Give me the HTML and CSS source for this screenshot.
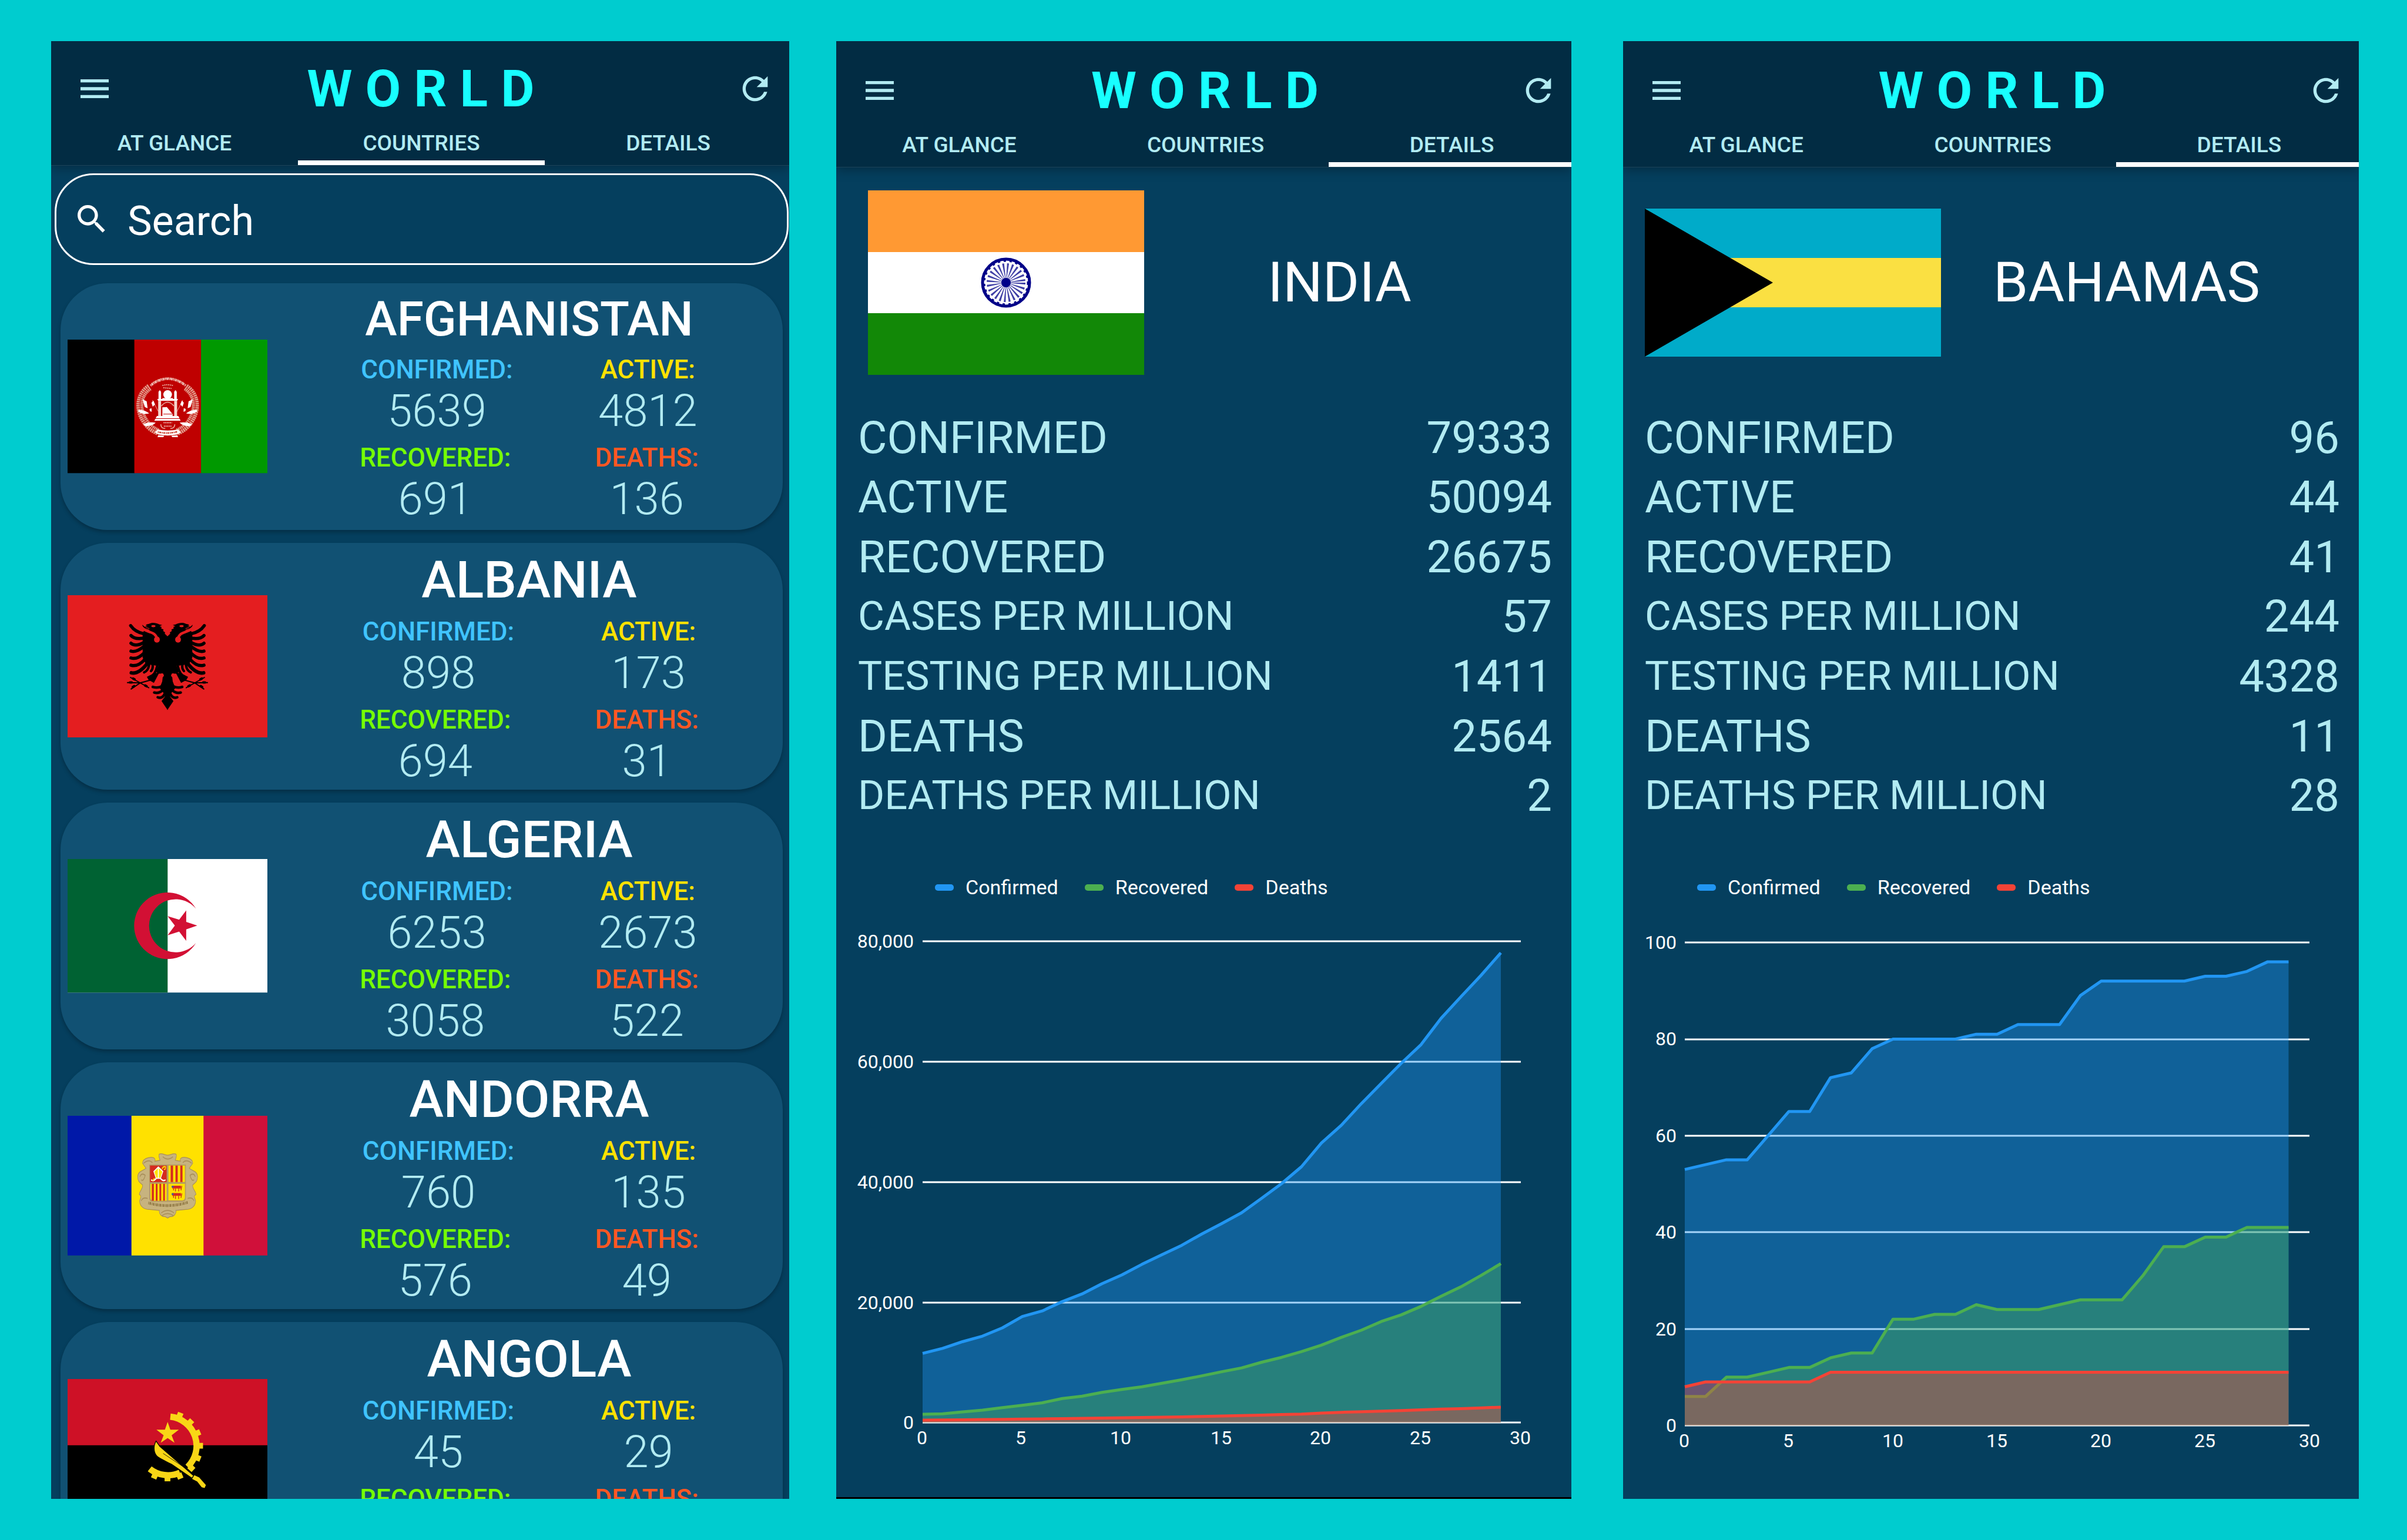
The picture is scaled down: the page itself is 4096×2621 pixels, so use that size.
FILE: index.html
```html
<!DOCTYPE html>
<html lang="en">
<head>
<meta charset="utf-8">
<title>World</title>
<link rel="stylesheet" href="styles.css">
</head>
<body>
<svg class="defs" aria-hidden="true">
  <symbol id="icon-menu" viewBox="0 0 24 24"><path d="M3 18h18v-2H3v2zm0-5h18v-2H3v2zm0-7v2h18V6H3z"/></symbol>
  <symbol id="icon-refresh" viewBox="0 0 24 24"><path d="M17.65 6.35C16.2 4.9 14.21 4 12 4c-4.42 0-7.99 3.58-7.99 8s3.57 8 7.99 8c3.73 0 6.84-2.55 7.73-6h-2.08c-.82 2.33-3.04 4-5.65 4-3.31 0-6-2.69-6-6s2.69-6 6-6c1.66 0 3.14.69 4.22 1.78L13 11h7V4l-2.35 2.35z"/></symbol>
  <symbol id="icon-search" viewBox="0 0 24 24"><path d="M15.5 14h-.79l-.28-.27C15.41 12.59 16 11.11 16 9.5 16 5.91 13.09 3 9.5 3S3 5.91 3 9.5 5.91 16 9.5 16c1.61 0 3.09-.59 4.23-1.57l.27.28v.79l5 4.99L20.49 19l-4.99-5zm-6 0C7.01 14 5 11.99 5 9.5S7.01 5 9.5 5 14 7.01 14 9.5 11.99 14 9.5 14z"/></symbol>
  <symbol id="eagle-half" viewBox="0 0 1248 890" overflow="visible">
    <path d="M656 368 L638 350 L640 342 L628 334 L630 324 L616 318 L618 308 L606 304 L622 296 L604 293 C580 280 555 280 540 289 L524 293 L519 301 L532 301 L514 308 L497 294 C500 308 512 318 528 322 L545 327 L520 338 L508 333 L500 350 L500 500 L520 540 L598 552 L585 590 L600 600 L628 600 L622 650 L606 690 L618 706 L636 728 L638 745 L618 772 L656 828 Z"/>
    <g fill="none" stroke="#000" stroke-linecap="round">
      <path stroke-width="20" d="M510 352Q452 340 425 300M508 378Q450 388 427 362M508 405Q455 435 427 410M508 430Q460 470 427 459M510 470Q465 515 427 502M514 510Q470 560 427 547"/>
      <path stroke-width="22" d="M530 535Q475 605 429 595"/>
      <path stroke-width="15" d="M540 545Q535 582 509 592M562 545Q566 570 552 584M590 555Q578 610 545 620"/>
      <path stroke-width="16" d="M618 680Q592 692 563 683M626 703Q600 726 572 718M636 728Q622 758 594 748"/>
      <path stroke-width="7" d="M560 637L485 658M485 658L405 656M485 658L424 624M485 658L428 696M485 658L538 688"/>
      <path stroke-width="15" d="M420 655h12M440 631l10 5M438 684l9-6M515 674l10 5"/>
      <path stroke="#e41e20" stroke-width="16" d="M512 326C545 345 583 342 589 384"/>
      <path stroke="#e41e20" stroke-width="36" d="M589 386v2"/>
      <path stroke="#e41e20" stroke-width="24" d="M620 611Q606 622 590 646"/>
    </g>
    <path d="M526 620 L560 604 L606 590 L570 658 L538 640 Z"/>
    <ellipse cx="567" cy="303" rx="13" ry="7" fill="#e41e20"/>
    <path d="M520 312l22 6" stroke="#e41e20" stroke-width="4"/>
  </symbol>
</svg>

<main class="stage">

  <section class="panel" aria-label="Countries">
    <header class="top">
      <div class="toolbar">
        <button class="icon-button" aria-label="Menu"><svg><use href="#icon-menu"/></svg></button>
        <h1 class="brand">WORLD</h1>
        <button class="icon-button" aria-label="Refresh"><svg><use href="#icon-refresh"/></svg></button>
      </div>
      <nav class="tabs">
        <a href="#glance">AT GLANCE</a>
        <a href="#countries" class="active" aria-current="page">COUNTRIES</a>
        <a href="#details">DETAILS</a>
      </nav>
    </header>

    <label class="search">
      <svg aria-hidden="true"><use href="#icon-search"/></svg>
      <input type="text" placeholder="Search" aria-label="Search">
    </label>

    <div class="cards">
      <article class="card">
        <svg class="flag" viewBox="0 0 416 278" role="img" aria-label="Flag of Afghanistan">
          <path fill="#000" d="M0 0h140v278H0z"/><path fill="#bf0000" d="M139 0h139v278H139z"/><path fill="#009900" d="M278 0h138v278H278z"/>
          <g transform="translate(140 63) scale(.3333)">
            <g fill="none">
              <path stroke="#e39c8c" stroke-width="44" stroke-dasharray="9 3" d="M92 108C28 150 10 240 62 318C88 358 118 378 148 388"/>
              <path stroke="#e39c8c" stroke-width="44" stroke-dasharray="9 3" d="M318 108C382 150 400 240 348 318C322 358 292 378 262 388"/>
              <path stroke="#bf0000" stroke-width="3" d="M86 112C24 160 14 240 66 318C92 356 118 374 148 384M324 112C386 160 396 240 344 318C318 356 292 374 262 384"/>
              <path stroke="#f3cfc6" stroke-width="15" stroke-dasharray="5 3 9 2 3 4" d="M98 98Q205 14 318 98"/>
              <path stroke="#e8a79a" stroke-width="10" stroke-dasharray="3 4 7 2" d="M108 84Q205 20 306 84"/>
              <path stroke="#e8a79a" stroke-width="7" stroke-dasharray="8 4" d="M172 98Q204 88 238 98M178 112L230 116"/>
              <path stroke="#f0bdb2" stroke-width="3" d="M110 190L148 262M300 190L262 262"/>
            </g>
            <g fill="#fff">
              <path d="M48 184L74 196L80 240L62 232ZM362 184L336 196L330 240L348 232ZM22 250Q60 248 90 272Q50 282 22 262ZM388 250Q350 248 320 272Q360 282 388 262ZM52 340Q92 322 130 330Q112 350 66 352ZM358 340Q318 322 280 330Q298 350 344 352Z"/>
              <path d="M104 206L116 192L126 216L112 230ZM306 206L294 192L284 216L298 230ZM92 244L104 240L106 262L94 258ZM318 244L306 240L304 262L316 258Z"/>
              <circle cx="205" cy="154" r="27"/>
              <path d="M148 138Q156 118 164 138V184H148ZM246 138Q254 118 262 138V184H246ZM140 182H270L264 194H146ZM172 176H238V184H172Z"/>
              <path fill="#f6d5cd" d="M146 194H164V290H146ZM246 194H264V290H246Z"/>
              <path d="M138 288H272L286 318H122ZM172 234L200 232L236 276V290H172Z"/>
              <path d="M140 372Q205 386 272 372L286 392L264 404Q205 416 148 404L126 392ZM146 408L184 412L178 420H142ZM228 412L266 408L270 420H234Z"/>
            </g>
            <path fill="none" stroke="#e8a79a" stroke-width="6" d="M166 226Q205 178 244 226"/>
            <path fill="none" stroke="#bf0000" stroke-width="4" d="M124 305H284M178 276H234"/>
            <path fill="none" stroke="#c9402f" stroke-width="9" stroke-dasharray="6 3 12 4" d="M144 388Q205 402 266 386"/>
            <path fill="none" stroke="#f0bdb2" stroke-width="8" stroke-dasharray="6 4" d="M180 330H232M182 352H230"/>
            <path fill="none" stroke="#e8a79a" stroke-width="6" d="M162 340Q164 368 190 366M250 340Q248 368 222 366"/>
          </g>
        </svg>
        <div class="info">
          <h2 class="long">AFGHANISTAN</h2>
          <dl class="figures">
            <div class="confirmed"><dt>CONFIRMED:</dt><dd>5639</dd></div>
            <div class="ill"><dt>ACTIVE:</dt><dd>4812</dd></div>
          </dl>
          <dl class="figures">
            <div class="recovered"><dt>RECOVERED:</dt><dd>691</dd></div>
            <div class="deaths"><dt>DEATHS:</dt><dd>136</dd></div>
          </dl>
        </div>
      </article>

      <article class="card">
        <svg class="flag" viewBox="0 0 1248 890" role="img" aria-label="Flag of Albania">
          <path fill="#e41e20" d="M0 0h1248v890H0z"/>
          <g transform="translate(-31 -110)">
            <use href="#eagle-half" width="1248" height="890"/>
            <use href="#eagle-half" width="1248" height="890" transform="translate(1310 0) scale(-1 1)"/>
          </g>
        </svg>
        <div class="info">
          <h2>ALBANIA</h2>
          <dl class="figures">
            <div class="confirmed"><dt>CONFIRMED:</dt><dd>898</dd></div>
            <div class="ill"><dt>ACTIVE:</dt><dd>173</dd></div>
          </dl>
          <dl class="figures">
            <div class="recovered"><dt>RECOVERED:</dt><dd>694</dd></div>
            <div class="deaths"><dt>DEATHS:</dt><dd>31</dd></div>
          </dl>
        </div>
      </article>

      <article class="card">
        <svg class="flag" viewBox="30 45 1248 834" role="img" aria-label="Flag of Algeria">
          <path fill="#fff" d="M30 45h1248v834H30z"/><path fill="#006233" d="M30 45h625v834H30z"/>
          <path fill="#d21034" d="M832 355A208 208 0 1 0 832 569A166 166 0 1 1 832 355ZM840 461L771 438V366L727 424L655 402L700 461L655 521L727 498L771 556V485Z"/>
        </svg>
        <div class="info">
          <h2>ALGERIA</h2>
          <dl class="figures">
            <div class="confirmed"><dt>CONFIRMED:</dt><dd>6253</dd></div>
            <div class="ill"><dt>ACTIVE:</dt><dd>2673</dd></div>
          </dl>
          <dl class="figures">
            <div class="recovered"><dt>RECOVERED:</dt><dd>3058</dd></div>
            <div class="deaths"><dt>DEATHS:</dt><dd>522</dd></div>
          </dl>
        </div>
      </article>

      <article class="card">
        <svg class="flag" viewBox="0 0 416 291" role="img" aria-label="Flag of Andorra">
          <path fill="#0018a8" d="M0 0h134v291H0z"/><path fill="#ffe100" d="M133 0h151v291H133z"/><path fill="#d0103a" d="M283 0h133v291H283z"/>
          <g transform="scale(.3333 .523) translate(-30 -33)">
            <path fill="#c7b37f" stroke="#a98f5a" stroke-width="3" d="M655 190C680 188 690 180 708 186C714 196 704 204 702 210L735 214C728 200 750 196 776 200C800 204 812 212 812 222L790 242C805 252 842 252 842 276C842 296 826 300 812 308C806 322 832 334 832 346C816 352 822 356 830 372C828 396 800 406 770 406L706 410C712 424 690 436 672 434L655 440L638 434C620 436 598 424 604 410L540 406C510 406 482 396 480 372C488 356 494 352 478 346C478 334 504 322 498 308C484 300 468 296 468 276C468 252 505 252 520 242L498 222C498 212 510 204 534 200C560 196 582 200 575 214L608 210C606 204 596 196 602 186C620 180 630 188 655 190Z"/>
            <g fill="none" stroke="#a98f5a" stroke-width="4">
              <path d="M625 196Q655 214 688 196M505 222Q540 204 560 220M805 222Q770 204 750 220M482 276Q492 258 515 270Q505 296 490 288M828 276Q818 258 795 270Q805 296 820 288M490 372Q500 356 530 362M820 372Q810 356 780 362M615 420Q655 400 695 420M620 430Q655 414 690 430"/>
              <path stroke="#8c7440" stroke-width="11" stroke-dasharray="4 4 8 5" d="M535 380Q655 402 780 378"/>
            </g>
            <path fill="#b39a66" d="M540 227H769V362Q769 376 740 376H570Q540 376 540 362Z"/>
            <path fill="#d52b1e" d="M545 231H649V297H545Z"/><path fill="#ffe100" d="M660 231H763V297H660ZM548 304H649V371H572Q548 371 548 360ZM660 304H763V358Q763 370 742 370H660Z"/>
            <path fill="#d52b1e" d="M674 231h15v66h-15zM704 231h14v66h-14zM734 231h14v66h-14zM556 304h13v67h-13zM581 304h11v67h-11zM604 304h11v67h-11zM627 304h11v67h-11z"/>
            <path fill="#fff" d="M597 234L628 254L612 284H582L566 254Z"/><path fill="#ffe100" d="M594 242V280H584L572 256ZM600 242V280H610L622 256Z"/>
            <path fill="none" stroke="#fff" stroke-width="6" d="M552 288Q566 296 584 282M642 288Q628 296 610 282"/>
            <path fill="none" stroke="#ffe100" stroke-width="5" d="M560 292L574 282M620 246Q624 234 642 236Q644 248 632 246"/>
            <path fill="none" stroke="#d52b1e" stroke-width="11" d="M684 317H738M684 346H738"/>
            <path fill="none" stroke="#d52b1e" stroke-width="5" d="M692 330v-8M704 334v-12M724 334v-12M738 330l6-18M692 360v-10M704 364v-12M724 364v-12M738 360l6-18"/>
            <path fill="#3f5f9a" d="M680 312h12v7h-12zM680 341h12v7h-12z"/>
          </g>
        </svg>
        <div class="info">
          <h2>ANDORRA</h2>
          <dl class="figures">
            <div class="confirmed"><dt>CONFIRMED:</dt><dd>760</dd></div>
            <div class="ill"><dt>ACTIVE:</dt><dd>135</dd></div>
          </dl>
          <dl class="figures">
            <div class="recovered"><dt>RECOVERED:</dt><dd>576</dd></div>
            <div class="deaths"><dt>DEATHS:</dt><dd>49</dd></div>
          </dl>
        </div>
      </article>

      <article class="card">
        <svg class="flag" viewBox="0 0 416 277" role="img" aria-label="Flag of Angola">
          <path fill="#ce1126" d="M0 0h416v139H0z"/><path fill="#000" d="M0 138h416v139H0z"/>
          <g fill="#f9d616">
            <path fill="none" stroke="#f9d616" stroke-width="13" d="M214 78.500A61 61 0 0 1 250 183M171 187A61 61 0 0 0 234 195"/>
            <path d="M202 65h12v12h-12z" transform="rotate(22 208 139)"/>
            <path d="M202 65h12v12h-12z" transform="rotate(44 208 139)"/>
            <path d="M202 65h12v12h-12z" transform="rotate(67 208 139)"/>
            <path d="M202 65h12v12h-12z" transform="rotate(90 208 139)"/>
            <path d="M202 65h12v12h-12z" transform="rotate(112 208 139)"/>
            <path d="M202 65h12v12h-12z" transform="rotate(133 208 139)"/>
            <path d="M202 65h12v12h-12z" transform="rotate(158 208 139)"/>
            <path d="M202 65h12v12h-12z" transform="rotate(180 208 139)"/>
            <path d="M202 65h12v12h-12z" transform="rotate(203 208 139)"/>
            <g transform="scale(.3333 .523) translate(-30 -1078)">
              <path d="M655 1249L672 1280H725L680 1302L698 1332L655 1313L612 1332L630 1302L585 1280H638Z"/>
              <path stroke="#000" stroke-width="4" d="M583 1325C566 1342 566 1372 590 1386Q610 1396 680 1418L806 1473L818 1463L606 1346Z"/>
              <path d="M822 1461L852 1470L894 1500L886 1512L868 1509L840 1486L808 1476Z"/>
            </g>
            <path fill="none" stroke="#000" stroke-width="1" d="M199 155L258 194"/>
          </g>
        </svg>
        <div class="info">
          <h2>ANGOLA</h2>
          <dl class="figures">
            <div class="confirmed"><dt>CONFIRMED:</dt><dd>45</dd></div>
            <div class="ill"><dt>ACTIVE:</dt><dd>29</dd></div>
          </dl>
          <dl class="figures">
            <div class="recovered"><dt>RECOVERED:</dt></div>
            <div class="deaths"><dt>DEATHS:</dt></div>
          </dl>
        </div>
      </article>
    </div>
  </section>

  <section class="panel detail india" aria-label="India">
    <header class="top">
      <div class="toolbar">
        <button class="icon-button" aria-label="Menu"><svg><use href="#icon-menu"/></svg></button>
        <h1 class="brand">WORLD</h1>
        <button class="icon-button" aria-label="Refresh"><svg><use href="#icon-refresh"/></svg></button>
      </div>
      <nav class="tabs">
        <a href="#glance">AT GLANCE</a>
        <a href="#countries">COUNTRIES</a>
        <a href="#details" class="active" aria-current="page">DETAILS</a>
      </nav>
    </header>
    <div class="country">
      <svg class="country-flag" viewBox="0 0 470 314" role="img" aria-label="Flag of India">
        <path fill="#ff9933" d="M0 0h470v105H0z"/><path fill="#fff" d="M0 105h470v104H0z"/><path fill="#128807" d="M0 209h470v105H0z"/>
        <circle cx="235" cy="157" r="40" fill="none" stroke="#000088" stroke-width="5"/>
        <circle cx="235" cy="157" r="37" fill="none" stroke="#000088" stroke-width="3" stroke-dasharray="4 6"/>
        <circle cx="235" cy="157" r="19" fill="none" stroke="#000088" stroke-opacity=".75" stroke-width="28" stroke-dasharray="2 3"/>
        <circle cx="235" cy="157" r="8" fill="#000088"/>
      </svg>
      <h2>INDIA</h2>
    </div>
    <table class="stats">
      <tr><th scope="row">CONFIRMED</th><td>79333</td></tr>
      <tr><th scope="row">ACTIVE</th><td>50094</td></tr>
      <tr><th scope="row">RECOVERED</th><td>26675</td></tr>
      <tr><th scope="row" class="rate">CASES PER MILLION</th><td>57</td></tr>
      <tr><th scope="row" class="rate">TESTING PER MILLION</th><td>1411</td></tr>
      <tr><th scope="row">DEATHS</th><td>2564</td></tr>
      <tr><th scope="row" class="rate">DEATHS PER MILLION</th><td>2</td></tr>
    </table>
    <ul class="legend">
      <li class="key-confirmed">Confirmed</li>
      <li class="key-recovered">Recovered</li>
      <li class="key-deaths">Deaths</li>
    </ul>
    <svg class="chart" viewBox="0 0 1251 960" role="img" aria-label="Cases in India over 30 days">
      <path class="grid" d="M147 70H1165M147 275H1165M147 480H1165M147 685H1165M147 889H1165"/>
      <g class="y-labels">
        <text x="132" y="81">80,000</text><text x="132" y="286">60,000</text><text x="132" y="491">40,000</text><text x="132" y="696">20,000</text><text x="132" y="900">0</text>
      </g>
      <g class="x-labels">
        <text x="146" y="926">0</text><text x="314" y="926">5</text><text x="484" y="926">10</text><text x="655" y="926">15</text><text x="824" y="926">20</text><text x="994" y="926">25</text><text x="1164" y="926">30</text>
      </g>
      <g transform="translate(147 889) scale(33.930 -.01024)">
        <polygon class="area confirmed-area" points="0,0 0,11487 1,12322 2,13430 3,14352 4,15722 5,17615 6,18539 7,20080 8,21370 9,23077 10,24530 11,26283 12,27890 13,29451 14,31324 15,33062 16,34863 17,37257 18,39699 19,42505 20,46437 21,49400 22,52987 23,56351 24,59695 25,62808 26,67161 27,70768 28,74292 29,78055 29,0"/>
        <polyline class="line confirmed-line" points="0,11487 1,12322 2,13430 3,14352 4,15722 5,17615 6,18539 7,20080 8,21370 9,23077 10,24530 11,26283 12,27890 13,29451 14,31324 15,33062 16,34863 17,37257 18,39699 19,42505 20,46437 21,49400 22,52987 23,56351 24,59695 25,62808 26,67161 27,70768 28,74292 29,78055"/>
        <polygon class="area recovered-area" points="0,0 0,1359 1,1432 2,1768 3,2041 4,2463 5,2854 6,3273 7,3975 8,4370 9,5012 10,5498 11,5939 12,6523 13,7104 14,7747 15,8437 16,9068 17,10007 18,10819 19,11775 20,12847 21,14142 22,15331 23,16776 24,17887 25,19301 26,20969 27,22549 28,24420 29,26400 29,0"/>
        <polyline class="line recovered-line" points="0,1359 1,1432 2,1768 3,2041 4,2463 5,2854 6,3273 7,3975 8,4370 9,5012 10,5498 11,5939 12,6523 13,7104 14,7747 15,8437 16,9068 17,10007 18,10819 19,11775 20,12847 21,14142 22,15331 23,16776 24,17887 25,19301 26,20969 27,22549 28,24420 29,26400"/>
        <polygon class="area deaths-area" points="0,0 0,393 1,405 2,448 3,486 4,521 5,559 6,592 7,645 8,681 9,721 10,780 11,825 12,881 13,939 14,1008 15,1079 16,1154 17,1223 18,1323 19,1391 20,1566 21,1693 22,1785 23,1889 24,1985 25,2101 26,2212 27,2294 28,2415 29,2551 29,0"/>
        <polyline class="line deaths-line" points="0,393 1,405 2,448 3,486 4,521 5,559 6,592 7,645 8,681 9,721 10,780 11,825 12,881 13,939 14,1008 15,1079 16,1154 17,1223 18,1323 19,1391 20,1566 21,1693 22,1785 23,1889 24,1985 25,2101 26,2212 27,2294 28,2415 29,2551"/>
      </g>
    </svg>
  </section>

  <section class="panel detail bahamas" aria-label="Bahamas">
    <header class="top">
      <div class="toolbar">
        <button class="icon-button" aria-label="Menu"><svg><use href="#icon-menu"/></svg></button>
        <h1 class="brand">WORLD</h1>
        <button class="icon-button" aria-label="Refresh"><svg><use href="#icon-refresh"/></svg></button>
      </div>
      <nav class="tabs">
        <a href="#glance">AT GLANCE</a>
        <a href="#countries">COUNTRIES</a>
        <a href="#details" class="active" aria-current="page">DETAILS</a>
      </nav>
    </header>
    <div class="country">
      <svg class="country-flag" viewBox="0 0 504 252" role="img" aria-label="Flag of the Bahamas">
        <path fill="#00abc9" d="M0 0h504v252H0z"/><path fill="#fae042" d="M0 84h504v84H0z"/><path fill="#000" d="M0 0L218 126L0 252z"/>
      </svg>
      <h2>BAHAMAS</h2>
    </div>
    <table class="stats">
      <tr><th scope="row">CONFIRMED</th><td>96</td></tr>
      <tr><th scope="row">ACTIVE</th><td>44</td></tr>
      <tr><th scope="row">RECOVERED</th><td>41</td></tr>
      <tr><th scope="row" class="rate">CASES PER MILLION</th><td>244</td></tr>
      <tr><th scope="row" class="rate">TESTING PER MILLION</th><td>4328</td></tr>
      <tr><th scope="row">DEATHS</th><td>11</td></tr>
      <tr><th scope="row" class="rate">DEATHS PER MILLION</th><td>28</td></tr>
    </table>
    <ul class="legend">
      <li class="key-confirmed">Confirmed</li>
      <li class="key-recovered">Recovered</li>
      <li class="key-deaths">Deaths</li>
    </ul>
    <svg class="chart" viewBox="0 0 1252 960" role="img" aria-label="Cases in the Bahamas over 30 days">
      <path class="grid" d="M105 72H1168M105 237H1168M105 401H1168M105 565H1168M105 730H1168M105 894H1168"/>
      <g class="y-labels">
        <text x="91" y="83">100</text><text x="91" y="247">80</text><text x="91" y="412">60</text><text x="91" y="576">40</text><text x="91" y="741">20</text><text x="91" y="905">0</text>
      </g>
      <g class="x-labels">
        <text x="104" y="931">0</text><text x="281" y="931">5</text><text x="459" y="931">10</text><text x="636" y="931">15</text><text x="813" y="931">20</text><text x="990" y="931">25</text><text x="1168" y="931">30</text>
      </g>
      <g transform="translate(105 894) scale(35.430 -8.220)">
        <polygon class="area confirmed-area" points="0,0 0,53 1,54 2,55 3,55 4,60 5,65 6,65 7,72 8,73 9,78 10,80 11,80 12,80 13,80 14,81 15,81 16,83 17,83 18,83 19,89 20,92 21,92 22,92 23,92 24,92 25,93 26,93 27,94 28,96 29,96 29,0"/>
        <polyline class="line confirmed-line" points="0,53 1,54 2,55 3,55 4,60 5,65 6,65 7,72 8,73 9,78 10,80 11,80 12,80 13,80 14,81 15,81 16,83 17,83 18,83 19,89 20,92 21,92 22,92 23,92 24,92 25,93 26,93 27,94 28,96 29,96"/>
        <polygon class="area recovered-area" points="0,0 0,6 1,6 2,10 3,10 4,11 5,12 6,12 7,14 8,15 9,15 10,22 11,22 12,23 13,23 14,25 15,24 16,24 17,24 18,25 19,26 20,26 21,26 22,31 23,37 24,37 25,39 26,39 27,41 28,41 29,41 29,0"/>
        <polyline class="line recovered-line" points="0,6 1,6 2,10 3,10 4,11 5,12 6,12 7,14 8,15 9,15 10,22 11,22 12,23 13,23 14,25 15,24 16,24 17,24 18,25 19,26 20,26 21,26 22,31 23,37 24,37 25,39 26,39 27,41 28,41 29,41"/>
        <polygon class="area deaths-area" points="0,0 0,8 1,9 6,9 7,11 29,11 29,0"/>
        <polyline class="line deaths-line" points="0,8 1,9 6,9 7,11 29,11"/>
      </g>
    </svg>
  </section>

</main>
</body>
</html>
```

FILE: styles.css
```css
:root {
  --frame: #00cccf;
  --bar: #022c43;
  --panel: #053f5e;
  --card: #115173;
  --ice: #b2ebf2;
  --blue: #2196f3;
  --green: #4caf50;
  --red: #f44336;
}

* {
  box-sizing: border-box;
}

html,
body {
  margin: 0;
  background: var(--frame);
  font-family: Roboto, "Liberation Sans", sans-serif;
  color: var(--ice);
}

h1,
h2,
dl,
dd,
ul {
  margin: 0;
  padding: 0;
}

.defs {
  position: absolute;
  width: 0;
  height: 0;
}

.stage {
  display: flex;
  gap: 80px;
  height: 100vh;
  padding: 70px 82px 70px 87px;
}

.panel {
  flex: 1256 1 0;
  min-width: 0;
  overflow: hidden;
  background: var(--panel);
}

.india {
  flex-grow: 1251;
  border-bottom: 3px solid #000;
}

.bahamas {
  flex-grow: 1252;
  margin-left: 8px;
}

/* Header */

.top {
  position: relative;
  z-index: 1;
  background: var(--bar);
  border-bottom: 1px solid #1c4358;
  box-shadow: 0 4px 18px rgba(0, 0, 0, 0.3);
}

.detail .top {
  padding-top: 3px;
}

.toolbar {
  display: flex;
  align-items: center;
  justify-content: space-between;
  height: 152px;
  padding: 10px 26px 0 42px;
}

.detail .toolbar {
  padding-right: 24px;
}

.icon-button {
  width: 64px;
  height: 64px;
  padding: 0;
  border: 0;
  background: none;
}

.icon-button svg {
  display: block;
  width: 64px;
  height: 64px;
  fill: var(--ice);
}

.brand {
  padding-left: 8px;
  font-size: 88px;
  line-height: 104px;
  font-weight: 700;
  letter-spacing: 22px;
  color: #18ffff;
}

.tabs {
  display: flex;
  margin-right: -4px;
}

.detail .tabs {
  margin-right: -6px;
}

.tabs a {
  flex: 1;
  height: 59px;
  border-bottom: 8px solid transparent;
  font-size: 37px;
  line-height: 44px;
  font-weight: 500;
  text-align: center;
  text-decoration: none;
  color: var(--ice);
}

.tabs .active {
  border-color: #fff;
}

/* Country list */

.search {
  display: flex;
  align-items: center;
  gap: 29px;
  height: 156px;
  margin: 13px 1px 31px 6px;
  padding: 0 32px 0 28px;
  border: 3px solid #fff;
  border-radius: 66px;
}

.search svg {
  width: 64px;
  height: 64px;
  fill: #fff;
}

.search input {
  flex: 1;
  min-width: 0;
  padding: 6px 0 0;
  border: 0;
  outline: 0;
  background: none;
  font: 400 70px/82px Roboto, "Liberation Sans", sans-serif;
  color: #fff;
}

.search input::placeholder {
  color: #fff;
  opacity: 1;
}

.cards {
  display: flex;
  flex-direction: column;
  gap: 22px;
  padding: 0 11px 0 16px;
}

.card {
  display: flex;
  align-items: center;
  gap: 14px;
  min-height: 420px;
  padding-left: 12px;
  border-radius: 80px;
  background: var(--card);
  box-shadow: 0 4px 6px rgba(0, 0, 0, 0.25);
}

.flag {
  flex: none;
  width: 340px;
}

.info {
  flex: 1;
  align-self: flex-start;
  padding-top: 14px;
}

.info h2 {
  margin-bottom: 13px;
  font-size: 88px;
  line-height: 98px;
  font-weight: 500;
  text-align: center;
  color: #fff;
}

.info .long {
  font-size: 82px;
  line-height: 94px;
}

.figures {
  display: flex;
  justify-content: space-evenly;
  text-align: center;
}

.figures + .figures {
  margin-top: 10px;
}

.figures dt {
  font-size: 44px;
  line-height: 52px;
  font-weight: 500;
}

.figures dd {
  font-size: 76px;
  line-height: 88px;
  font-weight: 300;
}

.confirmed dt {
  color: #40c4ff;
}

.ill dt {
  color: #ffe100;
}

.recovered dt {
  color: #76ff03;
}

.deaths dt {
  color: #ff5722;
}

/* Country details */

.country {
  display: flex;
  align-items: center;
  height: 314px;
  margin: 39px 79px 56px 37px;
}

.country-flag {
  flex: none;
  width: 504px;
  height: 314px;
}

.country h2 {
  flex: 1;
  font-size: 95px;
  line-height: 110px;
  font-weight: 400;
  text-align: center;
  color: #fff;
}

.stats {
  width: 100%;
  height: 711px;
  border-collapse: collapse;
}

.stats th,
.stats td {
  padding: 0;
  font-size: 76px;
  line-height: 88px;
  font-weight: 400;
}

.stats th {
  padding-left: 37px;
  text-align: left;
}

.stats td {
  padding-right: 33px;
  text-align: right;
}

.stats .rate {
  font-size: 69px;
}

.legend {
  display: flex;
  gap: 45px;
  margin-top: 83px;
  padding-left: 168px;
  list-style: none;
}

.bahamas .legend {
  padding-left: 126px;
}

.legend li {
  display: flex;
  align-items: center;
  gap: 20px;
  font-size: 34px;
  line-height: 44px;
  color: #fff;
}

.legend li::before {
  content: "";
  width: 32px;
  height: 11px;
  border-radius: 5px;
}

.key-confirmed::before {
  background: var(--blue);
}

.key-recovered::before {
  background: var(--green);
}

.key-deaths::before {
  background: var(--red);
}

.chart {
  display: block;
  width: 100%;
}

.chart text {
  font-size: 32px;
  fill: #fff;
}

.y-labels {
  text-anchor: end;
}

.x-labels {
  text-anchor: middle;
}

.grid {
  fill: none;
  stroke: #fff;
  stroke-width: 3px;
}

.area {
  fill-opacity: 0.4;
}

.line {
  fill: none;
  stroke-width: 5px;
  stroke-linejoin: round;
  vector-effect: non-scaling-stroke;
}

.confirmed-area {
  fill: var(--blue);
}

.recovered-area {
  fill: var(--green);
}

.deaths-area {
  fill: var(--red);
}

.confirmed-line {
  stroke: var(--blue);
}

.recovered-line {
  stroke: var(--green);
}

.deaths-line {
  stroke: var(--red);
}
```
